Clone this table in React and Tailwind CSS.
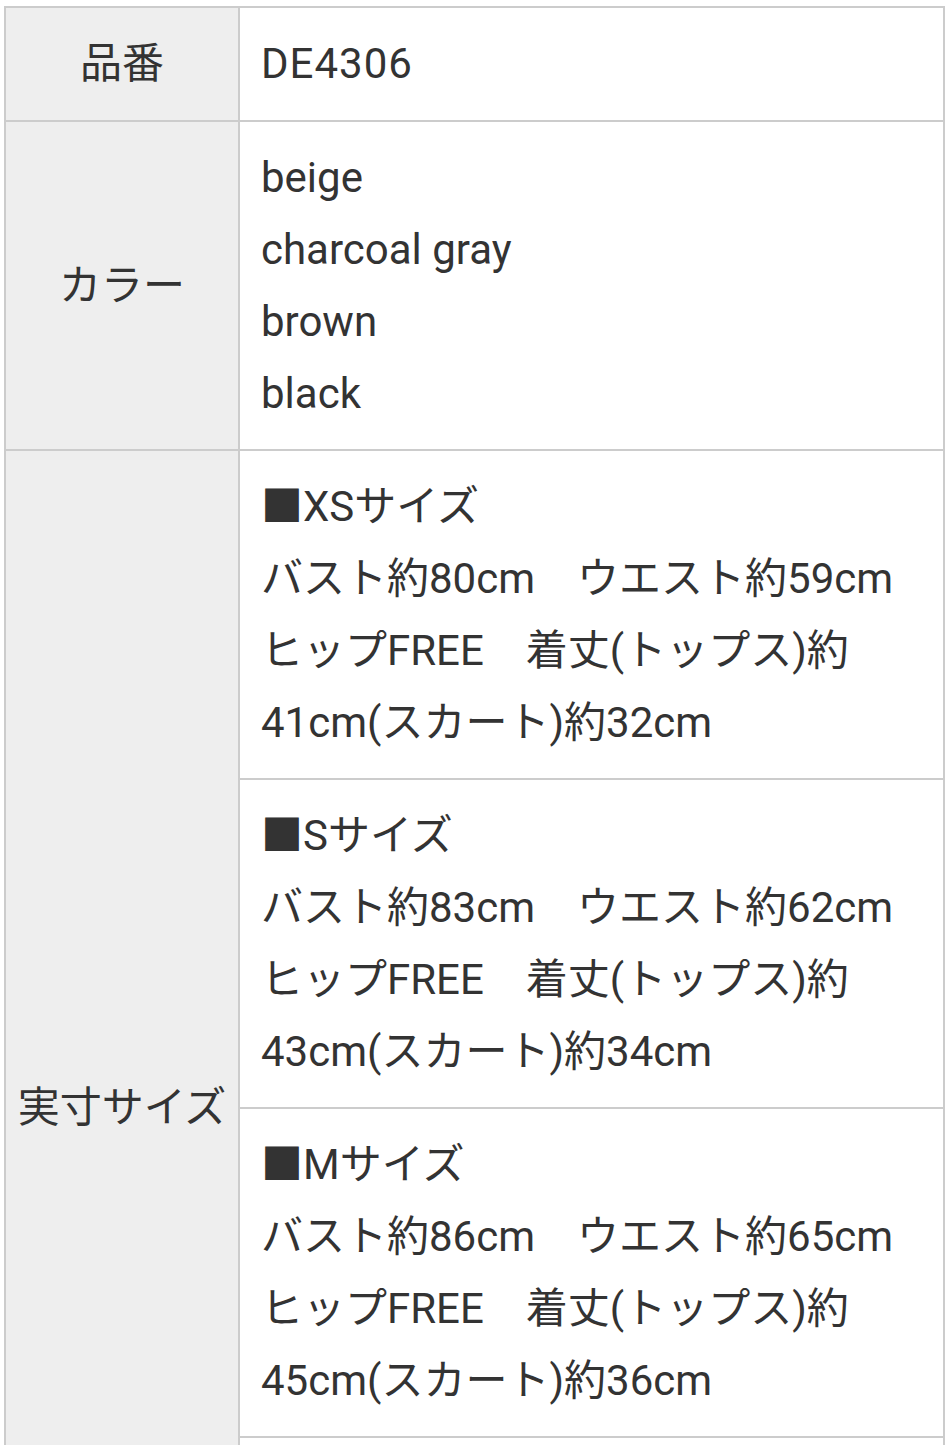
const FONT = { fontFamily: 'Roboto, "Noto Sans CJK JP", sans-serif' }

const COLORS = ['beige', 'charcoal gray', 'brown', 'black']

const SIZES = [
  { name: 'XS', bust: 80, waist: 59, tops: 41, skirt: 32 },
  { name: 'S', bust: 83, waist: 62, tops: 43, skirt: 34 },
  { name: 'M', bust: 86, waist: 65, tops: 45, skirt: 36 },
  { name: 'L', bust: 89, waist: 68, tops: 47, skirt: 38 },
]

const th = 'bg-[#eeeeee] border-2 border-[#cccccc] text-center align-middle font-normal px-2 w-[234px]'
const td = 'border-2 border-[#cccccc] pl-[21px] pr-5 pt-5 pb-[19px] align-top'

export default function App() {
  return (
    <div className="bg-white min-h-screen pt-[6px] pl-[4px] pr-[5px] text-[42px] leading-[72px] text-[#333333]" style={FONT}>
      <table className="w-full border-collapse">
        <tbody>
          {/* 品番 */}
          <tr>
            <th className={th}>品番</th>
            <td className={td + ' !pb-5'}>
              <span className="tracking-[1px]">DE4306</span>
            </td>
          </tr>

          {/* カラー */}
          <tr>
            <th className={th}>カラー</th>
            <td className={td}>
              {COLORS.map((c) => (
                <div key={c}>{c}</div>
              ))}
            </td>
          </tr>

          {/* 実寸サイズ */}
          {SIZES.map((s, idx) => (
            <tr key={s.name}>
              {idx === 0 && (
                <th className={th} rowSpan={SIZES.length}>実寸サイズ</th>
              )}
              <td className={td + ' whitespace-nowrap'}>
                <div>■{s.name}サイズ</div>
                <div>バスト約{s.bust}cm　ウエスト約{s.waist}cm</div>
                <div>ヒップFREE　着丈(トップス)約</div>
                <div>{s.tops}cm(スカート)約{s.skirt}cm</div>
              </td>
            </tr>
          ))}
        </tbody>
      </table>
    </div>
  )
}
